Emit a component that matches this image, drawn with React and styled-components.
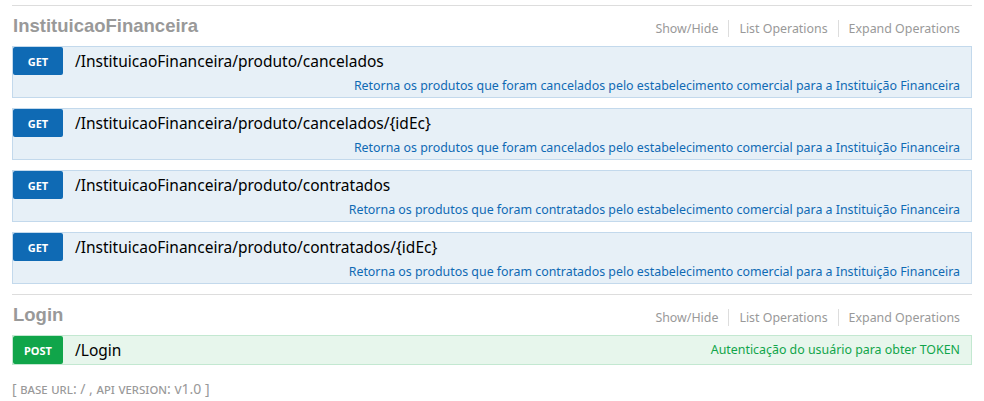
import styled, { createGlobalStyle } from "styled-components";

const GlobalStyle = createGlobalStyle`
  body {
    margin: 0;
    background: #fff;
    font-family: "Noto Sans", "Open Sans", sans-serif;
  }
`;

const METHODS = {
  get: { badge: "#0f6ab4", bg: "#e7f0f7", border: "#c3d9ec", text: "#0f6ab4" },
  post: { badge: "#10a54a", bg: "#e7f6ec", border: "#c3e8d1", text: "#10a54a" },
};

const resources = [
  {
    name: "InstituicaoFinanceira",
    operations: [
      {
        method: "get",
        path: "/InstituicaoFinanceira/produto/cancelados",
        summary: "Retorna os produtos que foram cancelados pelo estabelecimento comercial para a Instituição Financeira",
      },
      {
        method: "get",
        path: "/InstituicaoFinanceira/produto/cancelados/{idEc}",
        summary: "Retorna os produtos que foram cancelados pelo estabelecimento comercial para a Instituição Financeira",
      },
      {
        method: "get",
        path: "/InstituicaoFinanceira/produto/contratados",
        summary: "Retorna os produtos que foram contratados pelo estabelecimento comercial para a Instituição Financeira",
      },
      {
        method: "get",
        path: "/InstituicaoFinanceira/produto/contratados/{idEc}",
        summary: "Retorna os produtos que foram contratados pelo estabelecimento comercial para a Instituição Financeira",
      },
    ],
  },
  {
    name: "Login",
    operations: [
      { method: "post", path: "/Login", summary: "Autenticação do usuário para obter TOKEN" },
    ],
  },
];

export default function App() {
  return (
    <>
      <GlobalStyle />
      <Wrap>
        {resources.map((res) => (
          <Resource key={res.name}>
            <Heading>
              <Title>{res.name}</Title>
              <Options>
                <Option>Show/Hide</Option>
                <Option>List Operations</Option>
                <Option>Expand Operations</Option>
              </Options>
            </Heading>
            <OperationList>
              {res.operations.map((op) => (
                <Operation key={op.path} method={op.method}>
                  <Badge method={op.method}>{op.method}</Badge>
                  <Path>{op.path}</Path>
                  <Summary method={op.method}>{op.summary}</Summary>
                </Operation>
              ))}
            </OperationList>
          </Resource>
        ))}
        <Footer>
          [ <Caps>base url</Caps>: / , <Caps>api version</Caps>: v1.0 ]
        </Footer>
      </Wrap>
    </>
  );
}

const Wrap = styled.div`
  width: 960px;
  padding: 5px 12px 0;
`;

const Resource = styled.section`
  border-top: 1px solid #ddd;
`;

const Heading = styled.div`
  display: flex;
  justify-content: space-between;
  align-items: center;
  height: 40px;
`;

const Title = styled.h2`
  margin: 0 0 1px 1px;
  font-family: "Liberation Sans", Arial, sans-serif;
  font-size: 18.5px;
  font-weight: bold;
  color: #999;
`;

const Options = styled.ul`
  display: flex;
  margin: 4px 0 0;
  padding: 0 2px 0 0;
  list-style: none;
`;

const Option = styled.li`
  padding: 0 10px;
  font-size: 12.4px;
  line-height: 17px;
  color: #999;
  border-right: 1px solid #ddd;

  &:last-child {
    border-right: none;
  }
`;

const OperationList = styled.div`
  display: flex;
  flex-direction: column;
  gap: 10px;
  padding-bottom: 10px;
`;

const Operation = styled.div`
  display: flex;
  flex-wrap: wrap;
  align-items: center;
  background: ${({ method }) => METHODS[method].bg};
  border: 1px solid ${({ method }) => METHODS[method].border};
`;

const Badge = styled.span`
  box-sizing: border-box;
  width: 50px;
  height: 28px;
  padding-top: 7px;
  border-radius: 2px;
  background: ${({ method }) => METHODS[method].badge};
  color: #fff;
  font-size: 11px;
  font-weight: bold;
  line-height: 15px;
  text-align: center;
  text-transform: uppercase;
`;

const Path = styled.span`
  margin-left: 12px;
  font-size: 15.5px;
  color: #000;
`;

const Summary = styled.span`
  margin-left: auto;
  padding: 0 11px 0 10px;
  font-size: 12.4px;
  line-height: 22px;
  color: ${({ method }) => METHODS[method].text};
`;

const Footer = styled.h4`
  margin: 3px 0 0;
  font-size: 14px;
  line-height: 22px;
  font-weight: normal;
  color: #999;
`;

const Caps = styled.span`
  font-variant: small-caps;
`;
